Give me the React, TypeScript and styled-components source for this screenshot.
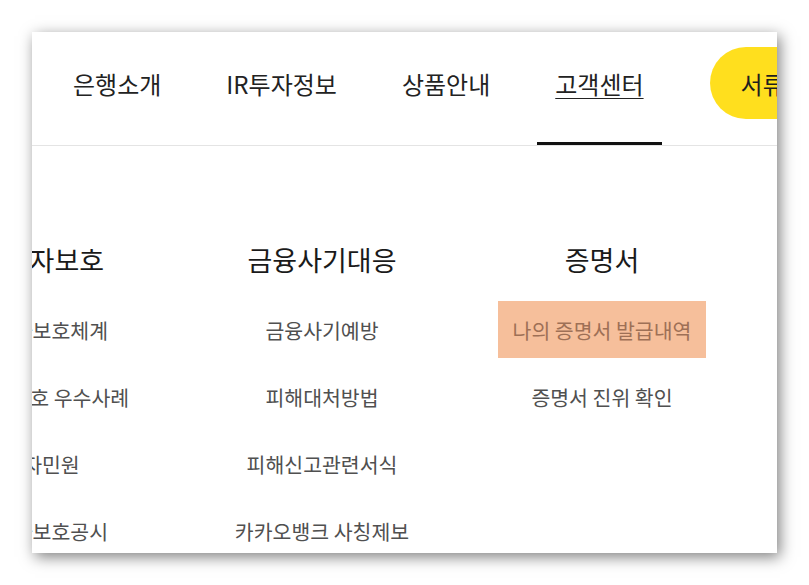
import React from "react";
import styled, { createGlobalStyle } from "styled-components";

const Global = createGlobalStyle`
  html, body { margin: 0; padding: 0; background: #ffffff; }
  body { font-family: "Noto Sans CJK KR", "Noto Sans", sans-serif; }
`;

const Page = styled.div`
  padding: 32px 0 0 32px;
  width: 809px;
  height: 585px;
  box-sizing: border-box;
`;

const Card = styled.div`
  width: 745px;
  height: 521px;
  background: #ffffff;
  overflow: hidden;
  box-shadow: 3px 4px 14px rgba(0, 0, 0, 0.5);
  display: flex;
  flex-direction: column;
`;

const Header = styled.header`
  height: 114px;
  box-sizing: border-box;
  border-bottom: 1px solid #e4e4e4;
  display: flex;
  align-items: stretch;
  padding-left: 23px;
  flex-shrink: 0;
`;

const Nav = styled.nav`
  display: flex;
  gap: 29px;
`;

const NavItem = styled.a<{ $active?: boolean }>`
  display: flex;
  align-items: center;
  justify-content: center;
  padding: 0 18px 8px;
  border-bottom: 3px solid ${(p) => (p.$active ? "#111111" : "transparent")};
  font-size: 24px;
  color: #222222;
  white-space: nowrap;
  text-decoration: ${(p) => (p.$active ? "underline" : "none")};
  text-underline-offset: 4px;
  text-decoration-thickness: 1px;
`;

const Pill = styled.a`
  align-self: center;
  margin: 0 0 11px 48px;
  height: 72px;
  border-radius: 36px;
  background: #ffdf1e;
  display: flex;
  align-items: center;
  padding: 0 32px 0 31px;
  font-size: 24px;
  color: #1e1e1e;
  white-space: nowrap;
  flex-shrink: 0;
`;

const Menu = styled.div`
  display: grid;
  grid-template-columns: repeat(3, 280px);
  margin-left: -130px;
  padding-top: 96px;
`;

const Column = styled.div`
  display: flex;
  flex-direction: column;
  align-items: center;
`;

const Heading = styled.h3`
  margin: 0 0 23px;
  height: 36px;
  line-height: 36px;
  font-size: 27px;
  font-weight: 400;
  color: #1a1a1a;
  white-space: nowrap;
`;

const List = styled.ul`
  list-style: none;
  margin: 0;
  padding: 0;
  display: flex;
  flex-direction: column;
  align-items: center;
  gap: 10px;
`;

const Item = styled.li<{ $active?: boolean }>`
  height: 57px;
  padding: 0 14px;
  display: flex;
  align-items: center;
  justify-content: center;
  font-size: 20.5px;
  white-space: nowrap;
  color: ${(p) => (p.$active ? "#9e7056" : "#505050")};
  background: ${(p) => (p.$active ? "#f6bf9b" : "transparent")};
  min-width: ${(p) => (p.$active ? "180px" : "auto")};
`;

const columns = [
  {
    title: "소비자보호",
    items: ["소비자보호체계", "소비자보호 우수사례", "전자민원", "소비자보호공시"],
  },
  {
    title: "금융사기대응",
    items: ["금융사기예방", "피해대처방법", "피해신고관련서식", "카카오뱅크 사칭제보"],
  },
  {
    title: "증명서",
    items: ["나의 증명서 발급내역", "증명서 진위 확인"],
    active: 0,
  },
];

export default function App() {
  return (
    <>
      <Global />
      <Page>
        <Card>
          <Header>
            <Nav>
              <NavItem>은행소개</NavItem>
              <NavItem>IR투자정보</NavItem>
              <NavItem>상품안내</NavItem>
              <NavItem $active>고객센터</NavItem>
            </Nav>
            <Pill>서류제출</Pill>
          </Header>
          <Menu>
            {columns.map((col) => (
              <Column key={col.title}>
                <Heading>{col.title}</Heading>
                <List>
                  {col.items.map((it, i) => (
                    <Item key={it} $active={col.active === i}>
                      {it}
                    </Item>
                  ))}
                </List>
              </Column>
            ))}
          </Menu>
        </Card>
      </Page>
    </>
  );
}
